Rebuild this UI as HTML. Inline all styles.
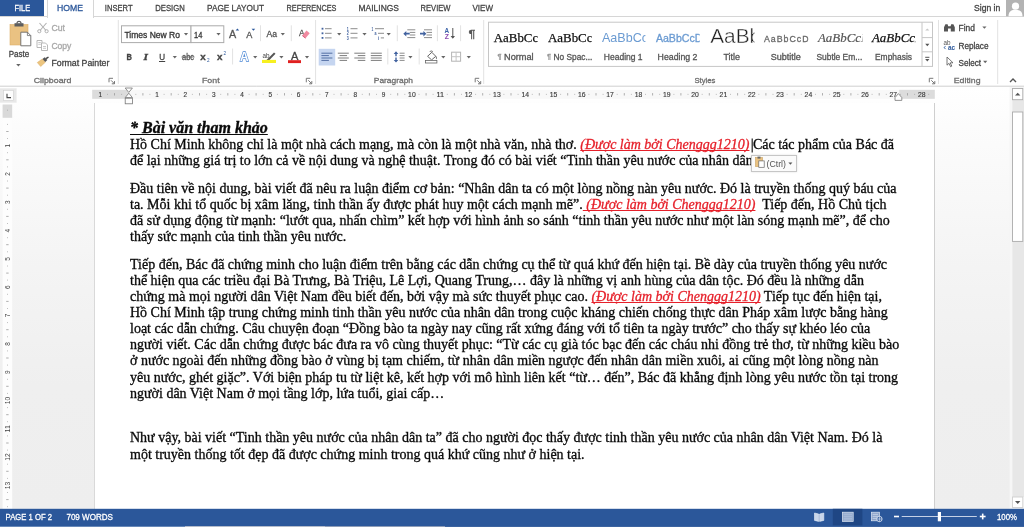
<!DOCTYPE html>
<html lang="vi"><head><meta charset="utf-8"><title>Document - Word</title>
<style>
*{box-sizing:border-box;margin:0;padding:0}
html,body{width:1024px;height:527px;overflow:hidden;background:#fff}
body{position:relative;font-family:"Liberation Sans",sans-serif;font-size:11px;color:#444}
svg{position:absolute;left:0;top:0;will-change:transform}
svg text{white-space:pre}
#doc{position:absolute;left:0;top:87px;width:1024px;height:422px;background:linear-gradient(#ffffff 0px,#fcfcfc 40px,#f4f4f4 180px,#efefef 300px,#eeeeee 422px)}
#page{position:absolute;left:94px;top:103px;width:841px;height:406px;background:#fff;border-left:1px solid #d9d9d9;border-right:1px solid #cfcfcf;}
.t{text-decoration-skip-ink:none;position:absolute;white-space:pre;font-family:"Liberation Serif",serif;font-size:14px;line-height:16px;color:#0a0a0a;left:130px;-webkit-text-stroke:0.32px #0a0a0a}
.title{text-decoration-thickness:1.3px;font-size:16px;font-weight:bold;font-style:italic;text-decoration:underline;-webkit-text-stroke:0.35px #0a0a0a}
.r{color:#e6202a;font-style:italic;text-decoration:underline;text-decoration-thickness:1.1px;-webkit-text-stroke:0.3px #e6202a}
#txt{position:absolute;left:0;top:0;width:1024px;height:527px;will-change:transform}
#pop{position:absolute;left:751px;top:155px;width:45.5px;height:17px;box-shadow:0 0 2px rgba(0,0,0,0.12);background:#fbfbfb;border:1px solid #c6c6c6}
</style></head><body>
<div id="doc"></div>
<div id="page"></div>
<div id="txt">
<div class="t title" id="l0" style="top:120px;">* Bài văn tham khảo</div>
<div class="t " id="l1" style="top:137px;">Hồ Chí Minh không chỉ là một nhà cách mạng, mà còn là một nhà văn, nhà thơ. <span class="r">(Được làm bởi Chenggg1210)</span> Các tác phẩm của Bác đã</div>
<div class="t " id="l2" style="top:153px;">để lại những giá trị to lớn cả về nội dung và nghệ thuật. Trong đó có bài viết “Tinh thần yêu nước của nhân dân</div>
<div class="t " id="l3" style="top:181px;">Đầu tiên về nội dung, bài viết đã nêu ra luận điểm cơ bản: “Nhân dân ta có một lòng nồng nàn yêu nước. Đó là truyền thống quý báu của</div>
<div class="t " id="l4" style="top:197px;">ta. Mỗi khi tổ quốc bị xâm lăng, tinh thần ấy được phát huy một cách mạnh mẽ”.<span class="r"> (Được làm bởi Chenggg1210)</span>&nbsp; Tiếp đến, Hồ Chủ tịch</div>
<div class="t " id="l5" style="top:213px;">đã sử dụng động từ mạnh: “lướt qua, nhấn chìm” kết hợp với hình ảnh so sánh “tinh thần yêu nước như một làn sóng mạnh mẽ”, để cho</div>
<div class="t " id="l6" style="top:229px;">thấy sức mạnh của tinh thần yêu nước.</div>
<div class="t " id="l7" style="top:257px;">Tiếp đến, Bác đã chứng minh cho luận điểm trên bằng các dẫn chứng cụ thể từ quá khứ đến hiện tại. Bề dày của truyền thống yêu nước</div>
<div class="t " id="l8" style="top:273px;">thể hiện qua các triều đại Bà Trưng, Bà Triệu, Lê Lợi, Quang Trung,… đây là những vị anh hùng của dân tộc. Đó đều là những dẫn</div>
<div class="t " id="l9" style="top:289px;">chứng mà mọi người dân Việt Nam đều biết đến, bởi vậy mà sức thuyết phục cao. <span class="r">(Được làm bởi Chenggg1210)</span> Tiếp tục đến hiện tại,</div>
<div class="t " id="l10" style="top:305px;">Hồ Chí Minh tập trung chứng minh tinh thần yêu nước của nhân dân trong cuộc kháng chiến chống thực dân Pháp xâm lược bằng hàng</div>
<div class="t " id="l11" style="top:321px;">loạt các dẫn chứng. Câu chuyện đoạn “Đồng bào ta ngày nay cũng rất xứng đáng với tổ tiên ta ngày trước” cho thấy sự khéo léo của</div>
<div class="t " id="l12" style="top:337px;">người viết. Các dẫn chứng được bác đưa ra vô cùng thuyết phục: “Từ các cụ già tóc bạc đến các cháu nhi đồng trẻ thơ, từ những kiều bào</div>
<div class="t " id="l13" style="top:353px;">ở nước ngoài đến những đồng bào ở vùng bị tạm chiếm, từ nhân dân miền ngược đến nhân dân miền xuôi, ai cũng một lòng nồng nàn</div>
<div class="t " id="l14" style="top:370px;">yêu nước, ghét giặc”. Với biện pháp tu từ liệt kê, kết hợp với mô hình liên kết “từ… đến”, Bác đã khẳng định lòng yêu nước tồn tại trong</div>
<div class="t " id="l15" style="top:386px;">người dân Việt Nam ở mọi tầng lớp, lứa tuổi, giai cấp…</div>
<div class="t " id="l16" style="top:430px;">Như vậy, bài viết “Tinh thần yêu nước của nhân dân ta” đã cho người đọc thấy được tinh thần yêu nước của nhân dân Việt Nam. Đó là</div>
<div class="t " id="l17" style="top:447px;">một truyền thống tốt đẹp đã được chứng minh trong quá khứ cũng như ở hiện tại.</div>
</div>
<div id="pop"></div>
<svg width="1024" height="527" viewBox="0 0 1024 527">
<rect x="0" y="0" width="1024" height="86" fill="#fff"/>
<rect x="0" y="0" width="44" height="16.8" fill="#2b579a"/><text x="14.5" y="11.4" font-family="Liberation Sans, sans-serif" font-size="9.6" fill="#fff" font-weight="normal" font-style="normal" textLength="15.7" lengthAdjust="spacingAndGlyphs" stroke="#fff" stroke-width="0.3">FILE</text><line x1="0" y1="16.5" x2="1024" y2="16.5" stroke="#d6d6d6" stroke-width="1"/><rect x="47.5" y="-1" width="46" height="18.5" fill="#fff" stroke="#d6d6d6" stroke-width="1"/><rect x="48" y="16" width="45" height="2" fill="#fff"/><text x="57" y="11.4" font-family="Liberation Sans, sans-serif" font-size="9.6" fill="#2b579a" font-weight="normal" font-style="normal" textLength="26.0" lengthAdjust="spacingAndGlyphs" stroke="#2b579a" stroke-width="0.3">HOME</text><text x="104.8" y="11.4" font-family="Liberation Sans, sans-serif" font-size="9.6" fill="#444" font-weight="normal" font-style="normal" textLength="27.8" lengthAdjust="spacingAndGlyphs" stroke="#444" stroke-width="0.3">INSERT</text><text x="155.3" y="11.4" font-family="Liberation Sans, sans-serif" font-size="9.6" fill="#444" font-weight="normal" font-style="normal" textLength="29.5" lengthAdjust="spacingAndGlyphs" stroke="#444" stroke-width="0.3">DESIGN</text><text x="207" y="11.4" font-family="Liberation Sans, sans-serif" font-size="9.6" fill="#444" font-weight="normal" font-style="normal" textLength="57.0" lengthAdjust="spacingAndGlyphs" stroke="#444" stroke-width="0.3">PAGE LAYOUT</text><text x="286.5" y="11.4" font-family="Liberation Sans, sans-serif" font-size="9.6" fill="#444" font-weight="normal" font-style="normal" textLength="50.0" lengthAdjust="spacingAndGlyphs" stroke="#444" stroke-width="0.3">REFERENCES</text><text x="358.5" y="11.4" font-family="Liberation Sans, sans-serif" font-size="9.6" fill="#444" font-weight="normal" font-style="normal" textLength="40.5" lengthAdjust="spacingAndGlyphs" stroke="#444" stroke-width="0.3">MAILINGS</text><text x="420.5" y="11.4" font-family="Liberation Sans, sans-serif" font-size="9.6" fill="#444" font-weight="normal" font-style="normal" textLength="30.0" lengthAdjust="spacingAndGlyphs" stroke="#444" stroke-width="0.3">REVIEW</text><text x="472.5" y="11.4" font-family="Liberation Sans, sans-serif" font-size="9.6" fill="#444" font-weight="normal" font-style="normal" textLength="20.5" lengthAdjust="spacingAndGlyphs" stroke="#444" stroke-width="0.3">VIEW</text><text x="974" y="10.6" font-family="Liberation Sans, sans-serif" font-size="8.7" fill="#444" font-weight="normal" font-style="normal" textLength="26.3" lengthAdjust="spacingAndGlyphs" stroke="#444" stroke-width="0.3">Sign in</text><rect x="1006" y="0" width="18" height="16.3" fill="#b3b3b3"/><circle cx="1015.5" cy="6.2" r="3.6" fill="#fff"/><path d="M1008.5,16.3 c0,-5 3,-6.5 7,-6.5 s7,1.5 7,6.5 z" fill="#fff"/><line x1="0" y1="86.2" x2="1024" y2="86.2" stroke="#c9c9c9" stroke-width="0.9"/><line x1="118.3" y1="20" x2="118.3" y2="84" stroke="#e2e2e2" stroke-width="1"/><line x1="315.6" y1="20" x2="315.6" y2="84" stroke="#e2e2e2" stroke-width="1"/><line x1="483.7" y1="20" x2="483.7" y2="84" stroke="#e2e2e2" stroke-width="1"/><line x1="938.5" y1="20" x2="938.5" y2="84" stroke="#e2e2e2" stroke-width="1"/><line x1="997.7" y1="20" x2="997.7" y2="84" stroke="#e2e2e2" stroke-width="1"/><text x="33.7" y="82.8" font-family="Liberation Sans, sans-serif" font-size="8.1" fill="#6e6e6e" font-weight="normal" font-style="normal" textLength="37.7" lengthAdjust="spacingAndGlyphs" stroke="#6e6e6e" stroke-width="0.3">Clipboard</text><text x="202" y="82.8" font-family="Liberation Sans, sans-serif" font-size="8.1" fill="#6e6e6e" font-weight="normal" font-style="normal" textLength="17.6" lengthAdjust="spacingAndGlyphs" stroke="#6e6e6e" stroke-width="0.3">Font</text><text x="373.8" y="82.8" font-family="Liberation Sans, sans-serif" font-size="8.1" fill="#6e6e6e" font-weight="normal" font-style="normal" textLength="39.2" lengthAdjust="spacingAndGlyphs" stroke="#6e6e6e" stroke-width="0.3">Paragraph</text><text x="694.4" y="82.8" font-family="Liberation Sans, sans-serif" font-size="8.1" fill="#6e6e6e" font-weight="normal" font-style="normal" textLength="21.0" lengthAdjust="spacingAndGlyphs" stroke="#6e6e6e" stroke-width="0.3">Styles</text><text x="953.8" y="82.8" font-family="Liberation Sans, sans-serif" font-size="8.1" fill="#6e6e6e" font-weight="normal" font-style="normal" textLength="26.7" lengthAdjust="spacingAndGlyphs" stroke="#6e6e6e" stroke-width="0.3">Editing</text><path d="M109,82.3 V78.3 H113" fill="none" stroke="#777" stroke-width="1"/><path d="M111,80.3 L114.5,83.8 M114.5,81.1 V83.8 H111.8" fill="none" stroke="#777" stroke-width="1"/><path d="M306.3,82.3 V78.3 H310.3" fill="none" stroke="#777" stroke-width="1"/><path d="M308.3,80.3 L311.8,83.8 M311.8,81.1 V83.8 H309.1" fill="none" stroke="#777" stroke-width="1"/><path d="M475.2,82.3 V78.3 H479.2" fill="none" stroke="#777" stroke-width="1"/><path d="M477.2,80.3 L480.7,83.8 M480.7,81.1 V83.8 H478.0" fill="none" stroke="#777" stroke-width="1"/><path d="M929.3,82.3 V78.3 H933.3" fill="none" stroke="#777" stroke-width="1"/><path d="M931.3,80.3 L934.8,83.8 M934.8,81.1 V83.8 H932.0999999999999" fill="none" stroke="#777" stroke-width="1"/><path d="M1010,82 l3,-3 l3,3" fill="none" stroke="#555" stroke-width="1.4"/><rect x="10" y="24.5" width="18" height="20.5" fill="#eac282"/><rect x="10" y="24.5" width="18" height="20.5" fill="none" stroke="#dcae68" stroke-width="0.6"/><rect x="14.5" y="23.2" width="9" height="3.3" fill="#5d5d5d"/><path d="M17,23.4 a2,2 0 0 1 4,0" fill="none" stroke="#5d5d5d" stroke-width="1.2"/><path d="M20.8,32.2 h6.6 l3.4,3.4 v10.2 h-10 z" fill="#fff" stroke="#6a6a6a" stroke-width="0.9"/><path d="M27.4,32.2 v3.4 h3.4" fill="none" stroke="#6a6a6a" stroke-width="0.8"/><text x="8.7" y="56.5" font-family="Liberation Sans, sans-serif" font-size="8.7" fill="#444" font-weight="normal" font-style="normal" textLength="20.5" lengthAdjust="spacingAndGlyphs" stroke="#444" stroke-width="0.3">Paste</text><path d="M16.2,64.0 h4.4 l-2.2,2.6 z" fill="#666"/><path d="M39.5,23 L46,30.5 M46.5,23 L40,30.5" fill="none" stroke="#b1b1b1" stroke-width="1.1"/><circle cx="39.3" cy="31.2" r="1.6" fill="none" stroke="#b1b1b1" stroke-width="1"/><circle cx="46.6" cy="31.2" r="1.6" fill="none" stroke="#b1b1b1" stroke-width="1"/><text x="51.4" y="31" font-family="Liberation Sans, sans-serif" font-size="8.7" fill="#a9a9a9" font-weight="normal" font-style="normal" textLength="13.6" lengthAdjust="spacingAndGlyphs" stroke="#a9a9a9" stroke-width="0.3">Cut</text><path d="M37,40.5 h5 v7 h-5 z" fill="none" stroke="#b1b1b1" stroke-width="0.9"/><path d="M41.5,43 h4 l2,2 v5.5 h-6 z" fill="#fff" stroke="#b1b1b1" stroke-width="0.9"/><line x1="38.3" y1="42.5" x2="40.8" y2="42.5" stroke="#b1b1b1" stroke-width="0.7"/><line x1="38.3" y1="44.3" x2="40.8" y2="44.3" stroke="#b1b1b1" stroke-width="0.7"/><line x1="43" y1="46.5" x2="46" y2="46.5" stroke="#b1b1b1" stroke-width="0.7"/><line x1="43" y1="48.3" x2="46" y2="48.3" stroke="#b1b1b1" stroke-width="0.7"/><text x="51.4" y="48.6" font-family="Liberation Sans, sans-serif" font-size="8.7" fill="#a9a9a9" font-weight="normal" font-style="normal" textLength="20.0" lengthAdjust="spacingAndGlyphs" stroke="#a9a9a9" stroke-width="0.3">Copy</text><path d="M37.3,62.5 l5,-3.4 l3,3.2 l-4.6,4.2 z" fill="#ecc57f" stroke="#d9ab63" stroke-width="0.5"/><path d="M42.5,59 l2.2,-1.8 l2.6,2.8 l-2,1.9 z" fill="#555"/><path d="M45.5,58 l2.6,-1.6 l0.8,1 l-2.3,1.9 z" fill="#444"/><text x="51.4" y="65.7" font-family="Liberation Sans, sans-serif" font-size="8.7" fill="#444" font-weight="normal" font-style="normal" textLength="58.0" lengthAdjust="spacingAndGlyphs" stroke="#444" stroke-width="0.3">Format Painter</text><rect x="121.5" y="25.8" width="69.5" height="16.8" fill="#fff" stroke="#ababab" stroke-width="1"/><rect x="191" y="25.8" width="32.8" height="16.8" fill="#fff" stroke="#ababab" stroke-width="1"/><text x="124.4" y="37.5" font-family="Liberation Sans, sans-serif" font-size="8.7" fill="#333" font-weight="normal" font-style="normal" textLength="55.6" lengthAdjust="spacingAndGlyphs" stroke="#333" stroke-width="0.3">Times New Ro</text><path d="M183.9,33.0 h4.2 l-2.1,2.4 z" fill="#666"/><text x="194" y="37.5" font-family="Liberation Sans, sans-serif" font-size="8.7" fill="#333" font-weight="normal" font-style="normal" textLength="8.3" lengthAdjust="spacingAndGlyphs" stroke="#333" stroke-width="0.3">14</text><path d="M216.4,33.0 h4.2 l-2.1,2.4 z" fill="#666"/><text x="229" y="38" font-family="Liberation Sans, sans-serif" font-size="11.8" fill="#555" font-weight="normal" font-style="normal" textLength="7.2" lengthAdjust="spacingAndGlyphs" stroke="#555" stroke-width="0.3">A</text><path d="M235.6,30.6 l1.8,-2 l1.8,2 z" fill="#2b579a"/><text x="246.2" y="38" font-family="Liberation Sans, sans-serif" font-size="9.6" fill="#555" font-weight="normal" font-style="normal" textLength="6.1" lengthAdjust="spacingAndGlyphs" stroke="#555" stroke-width="0.3">A</text><path d="M251.6,28.8 h3.6 l-1.8,2 z" fill="#2b579a"/><line x1="260.5" y1="25.3" x2="260.5" y2="41.2" stroke="#e2e2e2" stroke-width="1"/><text x="266.5" y="36.7" font-family="Liberation Sans, sans-serif" font-size="8.7" fill="#555" font-weight="normal" font-style="normal" textLength="10.5" lengthAdjust="spacingAndGlyphs" stroke="#555" stroke-width="0.3">Aa</text><path d="M280.7,33.0 h4.2 l-2.1,2.4 z" fill="#666"/><line x1="291.3" y1="25.3" x2="291.3" y2="41.2" stroke="#e2e2e2" stroke-width="1"/><text x="299" y="35.5" font-family="Liberation Sans, sans-serif" font-size="9.6" fill="#555" font-weight="normal" font-style="normal" textLength="5.5" lengthAdjust="spacingAndGlyphs" stroke="#555" stroke-width="0.3">A</text><path d="M302.3,35.6 l4.2,-5 l3.2,2.6 l-4.2,5 z" fill="#f08aa0"/><path d="M302.3,35.6 l3.2,2.6" fill="none" stroke="#d95f7c" stroke-width="1"/><text x="126.6" y="59.8" font-family="Liberation Sans, sans-serif" font-size="8.7" fill="#444" font-weight="bold" font-style="normal" textLength="5.4" lengthAdjust="spacingAndGlyphs" stroke="#444" stroke-width="0.3">B</text><text x="143.6" y="59.8" font-family="Liberation Serif, serif" font-size="8.7" fill="#444" font-weight="bold" font-style="italic" textLength="4.4" lengthAdjust="spacingAndGlyphs" stroke="#444" stroke-width="0.3">I</text><text x="159.2" y="59.6" font-family="Liberation Sans, sans-serif" font-size="8.7" fill="#444" font-weight="normal" font-style="normal" textLength="5.8" lengthAdjust="spacingAndGlyphs" stroke="#444" stroke-width="0.3">U</text><line x1="159" y1="61.5" x2="165.2" y2="61.5" stroke="#444" stroke-width="1"/><path d="M172.70000000000002,56.0 h4.2 l-2.1,2.4 z" fill="#666"/><text x="182" y="59.6" font-family="Liberation Sans, sans-serif" font-size="9.4" fill="#555" font-weight="normal" font-style="normal" textLength="12.0" lengthAdjust="spacingAndGlyphs" stroke="#555" stroke-width="0.3">abc</text><line x1="181.5" y1="57" x2="194.5" y2="57" stroke="#555" stroke-width="0.8"/><text x="200.3" y="59.8" font-family="Liberation Sans, sans-serif" font-size="8.7" fill="#444" font-weight="bold" font-style="normal" textLength="5.5" lengthAdjust="spacingAndGlyphs" stroke="#444" stroke-width="0.3">x</text><text x="207" y="61.5" font-family="Liberation Sans, sans-serif" font-size="5.5" fill="#2b579a" font-weight="normal" font-style="normal" textLength="2.6" lengthAdjust="spacingAndGlyphs">2</text><text x="217" y="59.8" font-family="Liberation Sans, sans-serif" font-size="8.7" fill="#444" font-weight="bold" font-style="normal" textLength="5.5" lengthAdjust="spacingAndGlyphs" stroke="#444" stroke-width="0.3">x</text><text x="223.6" y="55" font-family="Liberation Sans, sans-serif" font-size="5.5" fill="#2b579a" font-weight="normal" font-style="normal" textLength="2.6" lengthAdjust="spacingAndGlyphs">2</text><line x1="232.6" y1="48.5" x2="232.6" y2="64.5" stroke="#e2e2e2" stroke-width="1"/><text x="240" y="61.2" font-family="Liberation Sans, sans-serif" font-size="12.6" fill="#fff" font-weight="bold" font-style="normal" textLength="8.6" lengthAdjust="spacingAndGlyphs" stroke="#4f8ad6" stroke-width="1.3" paint-order="stroke">A</text><path d="M253.1,56.0 h4.2 l-2.1,2.4 z" fill="#666"/><text x="262.5" y="57.5" font-family="Liberation Sans, sans-serif" font-size="7" fill="#444" font-weight="normal" font-style="normal" textLength="7.0" lengthAdjust="spacingAndGlyphs">ab</text><path d="M266.5,60 l7.5,-7.6 l1.5,1.4 l-7.5,7.6 z" fill="#555"/><rect x="262" y="59.9" width="14" height="3.1" fill="#f7f020"/><path d="M279.29999999999995,56.0 h4.2 l-2.1,2.4 z" fill="#666"/><text x="291" y="59.6" font-family="Liberation Sans, sans-serif" font-size="10.6" fill="#444" font-weight="normal" font-style="normal" textLength="7.4" lengthAdjust="spacingAndGlyphs" stroke="#444" stroke-width="0.3">A</text><rect x="288" y="60.2" width="13" height="2.9" fill="#e02020"/><path d="M304.9,56.0 h4.2 l-2.1,2.4 z" fill="#666"/><rect x="321.6" y="27.8" width="1.8" height="1.8" fill="#41629f"/><line x1="325" y1="28.7" x2="331.6" y2="28.7" stroke="#777" stroke-width="0.85"/><rect x="321.6" y="32.4" width="1.8" height="1.8" fill="#41629f"/><line x1="325" y1="33.3" x2="331.6" y2="33.3" stroke="#777" stroke-width="0.85"/><rect x="321.6" y="37.0" width="1.8" height="1.8" fill="#41629f"/><line x1="325" y1="37.9" x2="331.6" y2="37.9" stroke="#777" stroke-width="0.85"/><path d="M337.09999999999997,33.0 h4.2 l-2.1,2.4 z" fill="#666"/><text x="346.8" y="30.5" font-family="Liberation Sans, sans-serif" font-size="4.6" fill="#41629f" font-weight="bold" font-style="normal" textLength="2.0" lengthAdjust="spacingAndGlyphs">1</text><line x1="350.5" y1="28.7" x2="357.5" y2="28.7" stroke="#777" stroke-width="0.85"/><text x="346.8" y="35.099999999999994" font-family="Liberation Sans, sans-serif" font-size="4.6" fill="#41629f" font-weight="bold" font-style="normal" textLength="2.0" lengthAdjust="spacingAndGlyphs">2</text><line x1="350.5" y1="33.3" x2="357.5" y2="33.3" stroke="#777" stroke-width="0.85"/><text x="346.8" y="39.699999999999996" font-family="Liberation Sans, sans-serif" font-size="4.6" fill="#41629f" font-weight="bold" font-style="normal" textLength="2.0" lengthAdjust="spacingAndGlyphs">3</text><line x1="350.5" y1="37.9" x2="357.5" y2="37.9" stroke="#777" stroke-width="0.85"/><path d="M362.4,33.0 h4.2 l-2.1,2.4 z" fill="#666"/><text x="371.4" y="30.5" font-family="Liberation Sans, sans-serif" font-size="4.6" fill="#41629f" font-weight="bold" font-style="normal" textLength="1.8" lengthAdjust="spacingAndGlyphs">1</text><line x1="375" y1="28.7" x2="384" y2="28.7" stroke="#777" stroke-width="0.85"/><text x="374.5" y="35.2" font-family="Liberation Sans, sans-serif" font-size="4.6" fill="#41629f" font-weight="bold" font-style="normal" textLength="2.0" lengthAdjust="spacingAndGlyphs">a</text><line x1="378" y1="33.3" x2="384" y2="33.3" stroke="#777" stroke-width="0.85"/><text x="378" y="39.8" font-family="Liberation Sans, sans-serif" font-size="4.6" fill="#41629f" font-weight="bold" font-style="normal" textLength="1.2" lengthAdjust="spacingAndGlyphs">i</text><line x1="380.8" y1="37.9" x2="384" y2="37.9" stroke="#777" stroke-width="0.85"/><path d="M386.59999999999997,33.0 h4.2 l-2.1,2.4 z" fill="#666"/><line x1="397.3" y1="25.3" x2="397.3" y2="41.2" stroke="#e2e2e2" stroke-width="1"/><line x1="407.3" y1="29.8" x2="415.3" y2="29.8" stroke="#777" stroke-width="0.85"/><line x1="409.8" y1="32.4" x2="415.3" y2="32.4" stroke="#777" stroke-width="0.85"/><line x1="409.8" y1="35" x2="415.3" y2="35" stroke="#777" stroke-width="0.85"/><line x1="407.3" y1="37.6" x2="415.3" y2="37.6" stroke="#777" stroke-width="0.85"/><path d="M403.3,33.7 l3,-2.8 v1.9 h3.4 v1.8 h-3.4 v1.9 z" fill="#41629f"/><line x1="424" y1="29.8" x2="432" y2="29.8" stroke="#777" stroke-width="0.85"/><line x1="426.5" y1="32.4" x2="432" y2="32.4" stroke="#777" stroke-width="0.85"/><line x1="426.5" y1="35" x2="432" y2="35" stroke="#777" stroke-width="0.85"/><line x1="424" y1="37.6" x2="432" y2="37.6" stroke="#777" stroke-width="0.85"/><path d="M426.4,33.7 l-3,-2.8 v1.9 h-3.4 v1.8 h3.4 v1.9 z" fill="#41629f"/><line x1="437.4" y1="25.3" x2="437.4" y2="41.2" stroke="#e2e2e2" stroke-width="1"/><text x="444.6" y="32.6" font-family="Liberation Sans, sans-serif" font-size="6.8" fill="#3b62a8" font-weight="bold" font-style="normal" textLength="4.6" lengthAdjust="spacingAndGlyphs">A</text><text x="444.8" y="39.2" font-family="Liberation Sans, sans-serif" font-size="6.8" fill="#8a4bb0" font-weight="bold" font-style="normal" textLength="4.2" lengthAdjust="spacingAndGlyphs">Z</text><line x1="452.8" y1="28" x2="452.8" y2="38" stroke="#555" stroke-width="1"/><path d="M450.6,36 l2.2,2.8 l2.2,-2.8 z" fill="#555"/><line x1="460.6" y1="25.3" x2="460.6" y2="41.2" stroke="#e2e2e2" stroke-width="1"/><text x="468.6" y="38" font-family="Liberation Sans, sans-serif" font-size="11.5" fill="#555" font-weight="normal" font-style="normal" textLength="6.9" lengthAdjust="spacingAndGlyphs" stroke="#555" stroke-width="0.3">¶</text><rect x="318.7" y="48.8" width="16.5" height="16.7" fill="#c5d5f0"/><line x1="321.4" y1="53.2" x2="332.4" y2="53.2" stroke="#3e5c96" stroke-width="0.85"/><line x1="321.4" y1="55.6" x2="328.9" y2="55.6" stroke="#3e5c96" stroke-width="0.85"/><line x1="321.4" y1="58" x2="332.4" y2="58" stroke="#3e5c96" stroke-width="0.85"/><line x1="321.4" y1="60.4" x2="328.9" y2="60.4" stroke="#3e5c96" stroke-width="0.85"/><line x1="337.8" y1="53.2" x2="348.8" y2="53.2" stroke="#666" stroke-width="0.85"/><line x1="339.55" y1="55.6" x2="347.05" y2="55.6" stroke="#666" stroke-width="0.85"/><line x1="337.8" y1="58" x2="348.8" y2="58" stroke="#666" stroke-width="0.85"/><line x1="339.55" y1="60.4" x2="347.05" y2="60.4" stroke="#666" stroke-width="0.85"/><line x1="354.3" y1="53.2" x2="365.3" y2="53.2" stroke="#666" stroke-width="0.85"/><line x1="357.8" y1="55.6" x2="365.3" y2="55.6" stroke="#666" stroke-width="0.85"/><line x1="354.3" y1="58" x2="365.3" y2="58" stroke="#666" stroke-width="0.85"/><line x1="357.8" y1="60.4" x2="365.3" y2="60.4" stroke="#666" stroke-width="0.85"/><line x1="370.8" y1="53.2" x2="381.8" y2="53.2" stroke="#666" stroke-width="0.85"/><line x1="370.8" y1="55.6" x2="381.8" y2="55.6" stroke="#666" stroke-width="0.85"/><line x1="370.8" y1="58" x2="381.8" y2="58" stroke="#666" stroke-width="0.85"/><line x1="370.8" y1="60.4" x2="381.8" y2="60.4" stroke="#666" stroke-width="0.85"/><line x1="387.8" y1="48.5" x2="387.8" y2="64.5" stroke="#e2e2e2" stroke-width="1"/><path d="M396,51.2 l-2.3,2.7 h1.6 v2.3 h1.4 v-2.3 h1.6 z M396,62.6 l-2.3,-2.7 h1.6 v-2.3 h1.4 v2.3 h1.6 z" fill="#41629f"/><line x1="399.6" y1="53.2" x2="404.6" y2="53.2" stroke="#777" stroke-width="0.85"/><line x1="399.6" y1="55.6" x2="404.6" y2="55.6" stroke="#777" stroke-width="0.85"/><line x1="399.6" y1="58" x2="404.6" y2="58" stroke="#777" stroke-width="0.85"/><line x1="399.6" y1="60.4" x2="404.6" y2="60.4" stroke="#777" stroke-width="0.85"/><path d="M408.29999999999995,56.0 h4.2 l-2.1,2.4 z" fill="#666"/><line x1="419.2" y1="48.5" x2="419.2" y2="64.5" stroke="#e2e2e2" stroke-width="1"/><path d="M427.6,56.3 l4.2,-4 l4,4 l-4.2,3.6 z" fill="#fff" stroke="#555" stroke-width="0.9"/><path d="M429.8,52 a1.6,1.6 0 0 1 3,0" fill="none" stroke="#555" stroke-width="0.8"/><path d="M436,56 q1.4,1.8 0.6,3.4 q-1.3,-0.6 -0.6,-3.4 z" fill="#555"/><rect x="425.5" y="60.4" width="11.4" height="2.6" fill="#fff" stroke="#666" stroke-width="0.8"/><path d="M441.2,56.0 h4.2 l-2.1,2.4 z" fill="#666"/><rect x="451.6" y="52.2" width="9" height="9" fill="none" stroke="#b4b4b4" stroke-width="1"/><line x1="456.1" y1="52.2" x2="456.1" y2="61.2" stroke="#c4c4c4" stroke-width="1"/><line x1="451.6" y1="56.7" x2="460.6" y2="56.7" stroke="#c4c4c4" stroke-width="1"/><path d="M466.7,56.0 h4.2 l-2.1,2.4 z" fill="#666"/><rect x="488.5" y="22.2" width="444" height="44.2" fill="#fff" stroke="#c6c6c6" stroke-width="1"/><line x1="922" y1="22.2" x2="922" y2="66.4" stroke="#c6c6c6" stroke-width="1"/><line x1="922" y1="37.6" x2="932.5" y2="37.6" stroke="#c6c6c6" stroke-width="1"/><line x1="922" y1="51.8" x2="932.5" y2="51.8" stroke="#c6c6c6" stroke-width="1"/><path d="M925.2,30.6 l2.1,-2.2 l2.1,2.2 z" fill="#c8c8c8"/><path d="M925.1999999999999,43.8 h4.2 l-2.1,2.4 z" fill="#555"/><line x1="925.2" y1="57.3" x2="929.4" y2="57.3" stroke="#555" stroke-width="1"/><path d="M925.1999999999999,59.099999999999994 h4.2 l-2.1,2.4 z" fill="#555"/><clipPath id="c1"><rect x="489" y="23" width="48.6" height="43"/></clipPath><clipPath id="c2"><rect x="540" y="23" width="51.6" height="43"/></clipPath><clipPath id="c3"><rect x="595" y="23" width="50.4" height="43"/></clipPath><clipPath id="c4"><rect x="650" y="23" width="49.6" height="43"/></clipPath><clipPath id="c5"><rect x="705" y="27.6" width="49.4" height="38"/></clipPath><clipPath id="c6"><rect x="760" y="23" width="48.4" height="43"/></clipPath><clipPath id="c7"><rect x="814" y="23" width="48.4" height="43"/></clipPath><clipPath id="c8"><rect x="868" y="23" width="47.4" height="43"/></clipPath><text x="493.8" y="41.6" font-family="Liberation Serif, serif" font-size="12.9" fill="#111" font-weight="normal" font-style="normal" stroke="#111" stroke-width="0.25" clip-path="url(#c1)">AaBbCcDd</text><text x="497.4" y="59.4" font-family="Liberation Sans, sans-serif" font-size="8" fill="#9a9a9a" font-weight="normal" font-style="normal" textLength="4.0" lengthAdjust="spacingAndGlyphs" stroke="#9a9a9a" stroke-width="0.3">¶</text><text x="504" y="59.6" font-family="Liberation Sans, sans-serif" font-size="8.7" fill="#555" font-weight="normal" font-style="normal" textLength="29.6" lengthAdjust="spacingAndGlyphs" stroke="#555" stroke-width="0.3">Normal</text><text x="548" y="41.6" font-family="Liberation Serif, serif" font-size="12.9" fill="#111" font-weight="normal" font-style="normal" stroke="#111" stroke-width="0.25" clip-path="url(#c2)">AaBbCcDd</text><text x="547" y="59.4" font-family="Liberation Sans, sans-serif" font-size="8" fill="#9a9a9a" font-weight="normal" font-style="normal" textLength="4.0" lengthAdjust="spacingAndGlyphs" stroke="#9a9a9a" stroke-width="0.3">¶</text><text x="553.6" y="59.6" font-family="Liberation Sans, sans-serif" font-size="8.7" fill="#555" font-weight="normal" font-style="normal" textLength="38.8" lengthAdjust="spacingAndGlyphs" stroke="#555" stroke-width="0.3">No Spac...</text><text x="602" y="41.8" font-family="Liberation Sans, sans-serif" font-size="13.6" fill="#6b9bd2" font-weight="normal" font-style="normal" clip-path="url(#c3)" textLength="62" lengthAdjust="spacingAndGlyphs">AaBbCcDd</text><text x="603.8" y="59.6" font-family="Liberation Sans, sans-serif" font-size="8.7" fill="#555" font-weight="normal" font-style="normal" textLength="38.8" lengthAdjust="spacingAndGlyphs" stroke="#555" stroke-width="0.3">Heading 1</text><text x="655.9" y="41.6" font-family="Liberation Sans, sans-serif" font-size="10.4" fill="#6b9bd2" font-weight="normal" font-style="normal" clip-path="url(#c4)" textLength="46.5" lengthAdjust="spacingAndGlyphs" stroke="#6b9bd2" stroke-width="0.3">AaBbCcD</text><text x="657.6" y="59.6" font-family="Liberation Sans, sans-serif" font-size="8.7" fill="#555" font-weight="normal" font-style="normal" textLength="39.9" lengthAdjust="spacingAndGlyphs" stroke="#555" stroke-width="0.3">Heading 2</text><text x="710.2" y="43" font-family="Liberation Sans, sans-serif" font-size="20.2" fill="#222" font-weight="normal" font-style="normal" clip-path="url(#c5)" textLength="51" lengthAdjust="spacingAndGlyphs" stroke="#fff" stroke-width="0.4">AaBb</text><text x="723.4" y="59.6" font-family="Liberation Sans, sans-serif" font-size="8.7" fill="#555" font-weight="normal" font-style="normal" textLength="16.6" lengthAdjust="spacingAndGlyphs" stroke="#555" stroke-width="0.3">Title</text><text x="763.9" y="41.7" font-family="Liberation Sans, sans-serif" font-size="8.8" fill="#6a6a6a" font-weight="normal" font-style="normal" clip-path="url(#c6)" textLength="44.6" lengthAdjust="spacing" stroke="#6a6a6a" stroke-width="0.3">AaBbCcD</text><text x="770.7" y="59.6" font-family="Liberation Sans, sans-serif" font-size="8.7" fill="#555" font-weight="normal" font-style="normal" textLength="30.1" lengthAdjust="spacingAndGlyphs" stroke="#555" stroke-width="0.3">Subtitle</text><text x="818" y="41.6" font-family="Liberation Serif, serif" font-size="12.9" fill="#555" font-weight="normal" font-style="italic" stroke="#555" stroke-width="0.2" clip-path="url(#c7)">AaBbCcDd</text><text x="816.4" y="59.6" font-family="Liberation Sans, sans-serif" font-size="8.7" fill="#555" font-weight="normal" font-style="normal" textLength="45.9" lengthAdjust="spacingAndGlyphs" stroke="#555" stroke-width="0.3">Subtle Em...</text><text x="872" y="41.6" font-family="Liberation Serif, serif" font-size="12.9" fill="#111" font-weight="normal" font-style="italic" stroke="#111" stroke-width="0.25" clip-path="url(#c8)">AaBbCcDd</text><text x="875" y="59.6" font-family="Liberation Sans, sans-serif" font-size="8.7" fill="#555" font-weight="normal" font-style="normal" textLength="37.0" lengthAdjust="spacingAndGlyphs" stroke="#555" stroke-width="0.3">Emphasis</text><path d="M944,31.5 v-4.2 l1.4,-3 h2.2 l0.6,2 h2.4 l0.6,-2 h2.2 l1.4,3 v4.2 h-4 v-3 h-2.8 v3 z" fill="#555"/><text x="958.5" y="31.4" font-family="Liberation Sans, sans-serif" font-size="8.7" fill="#444" font-weight="normal" font-style="normal" textLength="16.4" lengthAdjust="spacingAndGlyphs" stroke="#444" stroke-width="0.3">Find</text><path d="M982.3,26.400000000000002 h4.2 l-2.1,2.4 z" fill="#666"/><text x="943.5" y="45" font-family="Liberation Sans, sans-serif" font-size="6.8" fill="#555" font-weight="normal" font-style="normal" textLength="7.0" lengthAdjust="spacingAndGlyphs">ab</text><text x="948" y="49.8" font-family="Liberation Sans, sans-serif" font-size="6.8" fill="#2b579a" font-weight="bold" font-style="normal" textLength="7.2" lengthAdjust="spacingAndGlyphs">ac</text><path d="M944,47.5 l1.6,1.6 M944,47.5 l1.6,-1.2" fill="none" stroke="#2b579a" stroke-width="0.9"/><text x="958.5" y="48.7" font-family="Liberation Sans, sans-serif" font-size="8.7" fill="#444" font-weight="normal" font-style="normal" textLength="30.0" lengthAdjust="spacingAndGlyphs" stroke="#444" stroke-width="0.3">Replace</text><path d="M947,57 v8.2 l2,-1.9 l1.6,3.4 l1.2,-0.6 l-1.6,-3.3 h2.8 z" fill="#fff" stroke="#555" stroke-width="0.8"/><text x="958.5" y="66" font-family="Liberation Sans, sans-serif" font-size="8.7" fill="#444" font-weight="normal" font-style="normal" textLength="22.5" lengthAdjust="spacingAndGlyphs" stroke="#444" stroke-width="0.3">Select</text><path d="M983.1,60.8 h4.2 l-2.1,2.4 z" fill="#666"/>
<rect x="0" y="88.3" width="16.6" height="14.4" fill="#e8e8e8"/><rect x="3.6" y="90.4" width="9.8" height="10.2" fill="#fdfdfd" stroke="#d0d0d0" stroke-width="0.6"/><path d="M7,93.8 v3.8 h4" fill="none" stroke="#444" stroke-width="1.1"/><rect x="92.2" y="89.8" width="842.6" height="9" fill="#f8f8f8"/><rect x="92.2" y="89.8" width="36.3" height="9" fill="#dcdcdc"/><rect x="899.2" y="89.8" width="35.6" height="9" fill="#dcdcdc"/><text x="98.6" y="97.4" font-family="Liberation Sans, sans-serif" font-size="7.8" fill="#3a3a3a" font-weight="normal" font-style="normal" textLength="3.6" lengthAdjust="spacingAndGlyphs" stroke="#3a3a3a" stroke-width="0.15">1</text><line x1="107.5" y1="93.89999999999999" x2="107.5" y2="94.7" stroke="#9a9a9a" stroke-width="0.8"/><line x1="114.5" y1="93.1" x2="114.5" y2="95.5" stroke="#9a9a9a" stroke-width="0.8"/><line x1="121.6" y1="93.89999999999999" x2="121.6" y2="94.7" stroke="#9a9a9a" stroke-width="0.8"/><line x1="135.8" y1="93.89999999999999" x2="135.8" y2="94.7" stroke="#9a9a9a" stroke-width="0.8"/><line x1="142.9" y1="93.1" x2="142.9" y2="95.5" stroke="#9a9a9a" stroke-width="0.8"/><line x1="149.9" y1="93.89999999999999" x2="149.9" y2="94.7" stroke="#9a9a9a" stroke-width="0.8"/><text x="155.2" y="97.4" font-family="Liberation Sans, sans-serif" font-size="7.8" fill="#3a3a3a" font-weight="normal" font-style="normal" textLength="3.6" lengthAdjust="spacingAndGlyphs" stroke="#3a3a3a" stroke-width="0.15">1</text><line x1="164.1" y1="93.89999999999999" x2="164.1" y2="94.7" stroke="#9a9a9a" stroke-width="0.8"/><line x1="171.2" y1="93.1" x2="171.2" y2="95.5" stroke="#9a9a9a" stroke-width="0.8"/><line x1="178.3" y1="93.89999999999999" x2="178.3" y2="94.7" stroke="#9a9a9a" stroke-width="0.8"/><text x="183.5" y="97.4" font-family="Liberation Sans, sans-serif" font-size="7.8" fill="#3a3a3a" font-weight="normal" font-style="normal" textLength="3.6" lengthAdjust="spacingAndGlyphs" stroke="#3a3a3a" stroke-width="0.15">2</text><line x1="192.4" y1="93.89999999999999" x2="192.4" y2="94.7" stroke="#9a9a9a" stroke-width="0.8"/><line x1="199.5" y1="93.1" x2="199.5" y2="95.5" stroke="#9a9a9a" stroke-width="0.8"/><line x1="206.6" y1="93.89999999999999" x2="206.6" y2="94.7" stroke="#9a9a9a" stroke-width="0.8"/><text x="211.9" y="97.4" font-family="Liberation Sans, sans-serif" font-size="7.8" fill="#3a3a3a" font-weight="normal" font-style="normal" textLength="3.6" lengthAdjust="spacingAndGlyphs" stroke="#3a3a3a" stroke-width="0.15">3</text><line x1="220.7" y1="93.89999999999999" x2="220.7" y2="94.7" stroke="#9a9a9a" stroke-width="0.8"/><line x1="227.8" y1="93.1" x2="227.8" y2="95.5" stroke="#9a9a9a" stroke-width="0.8"/><line x1="234.9" y1="93.89999999999999" x2="234.9" y2="94.7" stroke="#9a9a9a" stroke-width="0.8"/><text x="240.2" y="97.4" font-family="Liberation Sans, sans-serif" font-size="7.8" fill="#3a3a3a" font-weight="normal" font-style="normal" textLength="3.6" lengthAdjust="spacingAndGlyphs" stroke="#3a3a3a" stroke-width="0.15">4</text><line x1="249.1" y1="93.89999999999999" x2="249.1" y2="94.7" stroke="#9a9a9a" stroke-width="0.8"/><line x1="256.1" y1="93.1" x2="256.1" y2="95.5" stroke="#9a9a9a" stroke-width="0.8"/><line x1="263.2" y1="93.89999999999999" x2="263.2" y2="94.7" stroke="#9a9a9a" stroke-width="0.8"/><text x="268.5" y="97.4" font-family="Liberation Sans, sans-serif" font-size="7.8" fill="#3a3a3a" font-weight="normal" font-style="normal" textLength="3.6" lengthAdjust="spacingAndGlyphs" stroke="#3a3a3a" stroke-width="0.15">5</text><line x1="277.4" y1="93.89999999999999" x2="277.4" y2="94.7" stroke="#9a9a9a" stroke-width="0.8"/><line x1="284.5" y1="93.1" x2="284.5" y2="95.5" stroke="#9a9a9a" stroke-width="0.8"/><line x1="291.5" y1="93.89999999999999" x2="291.5" y2="94.7" stroke="#9a9a9a" stroke-width="0.8"/><text x="296.8" y="97.4" font-family="Liberation Sans, sans-serif" font-size="7.8" fill="#3a3a3a" font-weight="normal" font-style="normal" textLength="3.6" lengthAdjust="spacingAndGlyphs" stroke="#3a3a3a" stroke-width="0.15">6</text><line x1="305.7" y1="93.89999999999999" x2="305.7" y2="94.7" stroke="#9a9a9a" stroke-width="0.8"/><line x1="312.8" y1="93.1" x2="312.8" y2="95.5" stroke="#9a9a9a" stroke-width="0.8"/><line x1="319.9" y1="93.89999999999999" x2="319.9" y2="94.7" stroke="#9a9a9a" stroke-width="0.8"/><text x="325.1" y="97.4" font-family="Liberation Sans, sans-serif" font-size="7.8" fill="#3a3a3a" font-weight="normal" font-style="normal" textLength="3.6" lengthAdjust="spacingAndGlyphs" stroke="#3a3a3a" stroke-width="0.15">7</text><line x1="334.0" y1="93.89999999999999" x2="334.0" y2="94.7" stroke="#9a9a9a" stroke-width="0.8"/><line x1="341.1" y1="93.1" x2="341.1" y2="95.5" stroke="#9a9a9a" stroke-width="0.8"/><line x1="348.2" y1="93.89999999999999" x2="348.2" y2="94.7" stroke="#9a9a9a" stroke-width="0.8"/><text x="353.5" y="97.4" font-family="Liberation Sans, sans-serif" font-size="7.8" fill="#3a3a3a" font-weight="normal" font-style="normal" textLength="3.6" lengthAdjust="spacingAndGlyphs" stroke="#3a3a3a" stroke-width="0.15">8</text><line x1="362.3" y1="93.89999999999999" x2="362.3" y2="94.7" stroke="#9a9a9a" stroke-width="0.8"/><line x1="369.4" y1="93.1" x2="369.4" y2="95.5" stroke="#9a9a9a" stroke-width="0.8"/><line x1="376.5" y1="93.89999999999999" x2="376.5" y2="94.7" stroke="#9a9a9a" stroke-width="0.8"/><text x="381.8" y="97.4" font-family="Liberation Sans, sans-serif" font-size="7.8" fill="#3a3a3a" font-weight="normal" font-style="normal" textLength="3.6" lengthAdjust="spacingAndGlyphs" stroke="#3a3a3a" stroke-width="0.15">9</text><line x1="390.7" y1="93.89999999999999" x2="390.7" y2="94.7" stroke="#9a9a9a" stroke-width="0.8"/><line x1="397.7" y1="93.1" x2="397.7" y2="95.5" stroke="#9a9a9a" stroke-width="0.8"/><line x1="404.8" y1="93.89999999999999" x2="404.8" y2="94.7" stroke="#9a9a9a" stroke-width="0.8"/><text x="408.1" y="97.4" font-family="Liberation Sans, sans-serif" font-size="7.8" fill="#3a3a3a" font-weight="normal" font-style="normal" textLength="7.6" lengthAdjust="spacingAndGlyphs" stroke="#3a3a3a" stroke-width="0.15">10</text><line x1="419.0" y1="93.89999999999999" x2="419.0" y2="94.7" stroke="#9a9a9a" stroke-width="0.8"/><line x1="426.1" y1="93.1" x2="426.1" y2="95.5" stroke="#9a9a9a" stroke-width="0.8"/><line x1="433.1" y1="93.89999999999999" x2="433.1" y2="94.7" stroke="#9a9a9a" stroke-width="0.8"/><text x="436.4" y="97.4" font-family="Liberation Sans, sans-serif" font-size="7.8" fill="#3a3a3a" font-weight="normal" font-style="normal" textLength="7.6" lengthAdjust="spacingAndGlyphs" stroke="#3a3a3a" stroke-width="0.15">11</text><line x1="447.3" y1="93.89999999999999" x2="447.3" y2="94.7" stroke="#9a9a9a" stroke-width="0.8"/><line x1="454.4" y1="93.1" x2="454.4" y2="95.5" stroke="#9a9a9a" stroke-width="0.8"/><line x1="461.5" y1="93.89999999999999" x2="461.5" y2="94.7" stroke="#9a9a9a" stroke-width="0.8"/><text x="464.7" y="97.4" font-family="Liberation Sans, sans-serif" font-size="7.8" fill="#3a3a3a" font-weight="normal" font-style="normal" textLength="7.6" lengthAdjust="spacingAndGlyphs" stroke="#3a3a3a" stroke-width="0.15">12</text><line x1="475.6" y1="93.89999999999999" x2="475.6" y2="94.7" stroke="#9a9a9a" stroke-width="0.8"/><line x1="482.7" y1="93.1" x2="482.7" y2="95.5" stroke="#9a9a9a" stroke-width="0.8"/><line x1="489.8" y1="93.89999999999999" x2="489.8" y2="94.7" stroke="#9a9a9a" stroke-width="0.8"/><text x="493.1" y="97.4" font-family="Liberation Sans, sans-serif" font-size="7.8" fill="#3a3a3a" font-weight="normal" font-style="normal" textLength="7.6" lengthAdjust="spacingAndGlyphs" stroke="#3a3a3a" stroke-width="0.15">13</text><line x1="503.9" y1="93.89999999999999" x2="503.9" y2="94.7" stroke="#9a9a9a" stroke-width="0.8"/><line x1="511.0" y1="93.1" x2="511.0" y2="95.5" stroke="#9a9a9a" stroke-width="0.8"/><line x1="518.1" y1="93.89999999999999" x2="518.1" y2="94.7" stroke="#9a9a9a" stroke-width="0.8"/><text x="521.4" y="97.4" font-family="Liberation Sans, sans-serif" font-size="7.8" fill="#3a3a3a" font-weight="normal" font-style="normal" textLength="7.6" lengthAdjust="spacingAndGlyphs" stroke="#3a3a3a" stroke-width="0.15">14</text><line x1="532.3" y1="93.89999999999999" x2="532.3" y2="94.7" stroke="#9a9a9a" stroke-width="0.8"/><line x1="539.3" y1="93.1" x2="539.3" y2="95.5" stroke="#9a9a9a" stroke-width="0.8"/><line x1="546.4" y1="93.89999999999999" x2="546.4" y2="94.7" stroke="#9a9a9a" stroke-width="0.8"/><text x="549.7" y="97.4" font-family="Liberation Sans, sans-serif" font-size="7.8" fill="#3a3a3a" font-weight="normal" font-style="normal" textLength="7.6" lengthAdjust="spacingAndGlyphs" stroke="#3a3a3a" stroke-width="0.15">15</text><line x1="560.6" y1="93.89999999999999" x2="560.6" y2="94.7" stroke="#9a9a9a" stroke-width="0.8"/><line x1="567.7" y1="93.1" x2="567.7" y2="95.5" stroke="#9a9a9a" stroke-width="0.8"/><line x1="574.7" y1="93.89999999999999" x2="574.7" y2="94.7" stroke="#9a9a9a" stroke-width="0.8"/><text x="578.0" y="97.4" font-family="Liberation Sans, sans-serif" font-size="7.8" fill="#3a3a3a" font-weight="normal" font-style="normal" textLength="7.6" lengthAdjust="spacingAndGlyphs" stroke="#3a3a3a" stroke-width="0.15">16</text><line x1="588.9" y1="93.89999999999999" x2="588.9" y2="94.7" stroke="#9a9a9a" stroke-width="0.8"/><line x1="596.0" y1="93.1" x2="596.0" y2="95.5" stroke="#9a9a9a" stroke-width="0.8"/><line x1="603.1" y1="93.89999999999999" x2="603.1" y2="94.7" stroke="#9a9a9a" stroke-width="0.8"/><text x="606.3" y="97.4" font-family="Liberation Sans, sans-serif" font-size="7.8" fill="#3a3a3a" font-weight="normal" font-style="normal" textLength="7.6" lengthAdjust="spacingAndGlyphs" stroke="#3a3a3a" stroke-width="0.15">17</text><line x1="617.2" y1="93.89999999999999" x2="617.2" y2="94.7" stroke="#9a9a9a" stroke-width="0.8"/><line x1="624.3" y1="93.1" x2="624.3" y2="95.5" stroke="#9a9a9a" stroke-width="0.8"/><line x1="631.4" y1="93.89999999999999" x2="631.4" y2="94.7" stroke="#9a9a9a" stroke-width="0.8"/><text x="634.7" y="97.4" font-family="Liberation Sans, sans-serif" font-size="7.8" fill="#3a3a3a" font-weight="normal" font-style="normal" textLength="7.6" lengthAdjust="spacingAndGlyphs" stroke="#3a3a3a" stroke-width="0.15">18</text><line x1="645.5" y1="93.89999999999999" x2="645.5" y2="94.7" stroke="#9a9a9a" stroke-width="0.8"/><line x1="652.6" y1="93.1" x2="652.6" y2="95.5" stroke="#9a9a9a" stroke-width="0.8"/><line x1="659.7" y1="93.89999999999999" x2="659.7" y2="94.7" stroke="#9a9a9a" stroke-width="0.8"/><text x="663.0" y="97.4" font-family="Liberation Sans, sans-serif" font-size="7.8" fill="#3a3a3a" font-weight="normal" font-style="normal" textLength="7.6" lengthAdjust="spacingAndGlyphs" stroke="#3a3a3a" stroke-width="0.15">19</text><line x1="673.9" y1="93.89999999999999" x2="673.9" y2="94.7" stroke="#9a9a9a" stroke-width="0.8"/><line x1="680.9" y1="93.1" x2="680.9" y2="95.5" stroke="#9a9a9a" stroke-width="0.8"/><line x1="688.0" y1="93.89999999999999" x2="688.0" y2="94.7" stroke="#9a9a9a" stroke-width="0.8"/><text x="691.3" y="97.4" font-family="Liberation Sans, sans-serif" font-size="7.8" fill="#3a3a3a" font-weight="normal" font-style="normal" textLength="7.6" lengthAdjust="spacingAndGlyphs" stroke="#3a3a3a" stroke-width="0.15">20</text><line x1="702.2" y1="93.89999999999999" x2="702.2" y2="94.7" stroke="#9a9a9a" stroke-width="0.8"/><line x1="709.3" y1="93.1" x2="709.3" y2="95.5" stroke="#9a9a9a" stroke-width="0.8"/><line x1="716.3" y1="93.89999999999999" x2="716.3" y2="94.7" stroke="#9a9a9a" stroke-width="0.8"/><text x="719.6" y="97.4" font-family="Liberation Sans, sans-serif" font-size="7.8" fill="#3a3a3a" font-weight="normal" font-style="normal" textLength="7.6" lengthAdjust="spacingAndGlyphs" stroke="#3a3a3a" stroke-width="0.15">21</text><line x1="730.5" y1="93.89999999999999" x2="730.5" y2="94.7" stroke="#9a9a9a" stroke-width="0.8"/><line x1="737.6" y1="93.1" x2="737.6" y2="95.5" stroke="#9a9a9a" stroke-width="0.8"/><line x1="744.7" y1="93.89999999999999" x2="744.7" y2="94.7" stroke="#9a9a9a" stroke-width="0.8"/><text x="747.9" y="97.4" font-family="Liberation Sans, sans-serif" font-size="7.8" fill="#3a3a3a" font-weight="normal" font-style="normal" textLength="7.6" lengthAdjust="spacingAndGlyphs" stroke="#3a3a3a" stroke-width="0.15">22</text><line x1="758.8" y1="93.89999999999999" x2="758.8" y2="94.7" stroke="#9a9a9a" stroke-width="0.8"/><line x1="765.9" y1="93.1" x2="765.9" y2="95.5" stroke="#9a9a9a" stroke-width="0.8"/><line x1="773.0" y1="93.89999999999999" x2="773.0" y2="94.7" stroke="#9a9a9a" stroke-width="0.8"/><text x="776.3" y="97.4" font-family="Liberation Sans, sans-serif" font-size="7.8" fill="#3a3a3a" font-weight="normal" font-style="normal" textLength="7.6" lengthAdjust="spacingAndGlyphs" stroke="#3a3a3a" stroke-width="0.15">23</text><line x1="787.1" y1="93.89999999999999" x2="787.1" y2="94.7" stroke="#9a9a9a" stroke-width="0.8"/><line x1="794.2" y1="93.1" x2="794.2" y2="95.5" stroke="#9a9a9a" stroke-width="0.8"/><line x1="801.3" y1="93.89999999999999" x2="801.3" y2="94.7" stroke="#9a9a9a" stroke-width="0.8"/><text x="804.6" y="97.4" font-family="Liberation Sans, sans-serif" font-size="7.8" fill="#3a3a3a" font-weight="normal" font-style="normal" textLength="7.6" lengthAdjust="spacingAndGlyphs" stroke="#3a3a3a" stroke-width="0.15">24</text><line x1="815.5" y1="93.89999999999999" x2="815.5" y2="94.7" stroke="#9a9a9a" stroke-width="0.8"/><line x1="822.5" y1="93.1" x2="822.5" y2="95.5" stroke="#9a9a9a" stroke-width="0.8"/><line x1="829.6" y1="93.89999999999999" x2="829.6" y2="94.7" stroke="#9a9a9a" stroke-width="0.8"/><text x="832.9" y="97.4" font-family="Liberation Sans, sans-serif" font-size="7.8" fill="#3a3a3a" font-weight="normal" font-style="normal" textLength="7.6" lengthAdjust="spacingAndGlyphs" stroke="#3a3a3a" stroke-width="0.15">25</text><line x1="843.8" y1="93.89999999999999" x2="843.8" y2="94.7" stroke="#9a9a9a" stroke-width="0.8"/><line x1="850.9" y1="93.1" x2="850.9" y2="95.5" stroke="#9a9a9a" stroke-width="0.8"/><line x1="857.9" y1="93.89999999999999" x2="857.9" y2="94.7" stroke="#9a9a9a" stroke-width="0.8"/><text x="861.2" y="97.4" font-family="Liberation Sans, sans-serif" font-size="7.8" fill="#3a3a3a" font-weight="normal" font-style="normal" textLength="7.6" lengthAdjust="spacingAndGlyphs" stroke="#3a3a3a" stroke-width="0.15">26</text><line x1="872.1" y1="93.89999999999999" x2="872.1" y2="94.7" stroke="#9a9a9a" stroke-width="0.8"/><line x1="879.2" y1="93.1" x2="879.2" y2="95.5" stroke="#9a9a9a" stroke-width="0.8"/><line x1="886.3" y1="93.89999999999999" x2="886.3" y2="94.7" stroke="#9a9a9a" stroke-width="0.8"/><text x="889.5" y="97.4" font-family="Liberation Sans, sans-serif" font-size="7.8" fill="#3a3a3a" font-weight="normal" font-style="normal" textLength="7.6" lengthAdjust="spacingAndGlyphs" stroke="#3a3a3a" stroke-width="0.15">27</text><line x1="900.4" y1="93.89999999999999" x2="900.4" y2="94.7" stroke="#9a9a9a" stroke-width="0.8"/><line x1="907.5" y1="93.1" x2="907.5" y2="95.5" stroke="#9a9a9a" stroke-width="0.8"/><line x1="914.6" y1="93.89999999999999" x2="914.6" y2="94.7" stroke="#9a9a9a" stroke-width="0.8"/><text x="917.9" y="97.4" font-family="Liberation Sans, sans-serif" font-size="7.8" fill="#3a3a3a" font-weight="normal" font-style="normal" textLength="7.6" lengthAdjust="spacingAndGlyphs" stroke="#3a3a3a" stroke-width="0.15">28</text><line x1="928.7" y1="93.89999999999999" x2="928.7" y2="94.7" stroke="#9a9a9a" stroke-width="0.8"/><path d="M125.2,88 h7.2 l-3.6,4.4 z" fill="#fdfdfd" stroke="#777" stroke-width="0.8"/><path d="M125.2,97.6 l3.6,-4.4 l3.6,4.4 z" fill="#fdfdfd" stroke="#777" stroke-width="0.8"/><rect x="125.2" y="98.2" width="7.2" height="5.6" fill="#fdfdfd" stroke="#777" stroke-width="0.8"/><path d="M895,97.6 l3.4,-4 l3.4,4 v2.8 h-6.8 z" fill="#fdfdfd" stroke="#777" stroke-width="0.8"/><rect x="2.6" y="104.5" width="9.6" height="404.5" fill="#fdfdfd"/><rect x="2.6" y="104.5" width="9.6" height="13.3" fill="#d9d9d9"/><line x1="7.0" y1="124.4" x2="7.800000000000001" y2="124.4" stroke="#9a9a9a" stroke-width="0.8"/><line x1="6.2" y1="131.5" x2="8.6" y2="131.5" stroke="#9a9a9a" stroke-width="0.8"/><line x1="7.0" y1="138.5" x2="7.800000000000001" y2="138.5" stroke="#9a9a9a" stroke-width="0.8"/><text transform="translate(10,147.4) rotate(-90)" font-family="Liberation Sans, sans-serif" font-size="7.4" fill="#444" textLength="3.6" lengthAdjust="spacingAndGlyphs">1</text><line x1="7.0" y1="152.7" x2="7.800000000000001" y2="152.7" stroke="#9a9a9a" stroke-width="0.8"/><line x1="6.2" y1="159.8" x2="8.6" y2="159.8" stroke="#9a9a9a" stroke-width="0.8"/><line x1="7.0" y1="166.9" x2="7.800000000000001" y2="166.9" stroke="#9a9a9a" stroke-width="0.8"/><text transform="translate(10,175.7) rotate(-90)" font-family="Liberation Sans, sans-serif" font-size="7.4" fill="#444" textLength="3.6" lengthAdjust="spacingAndGlyphs">2</text><line x1="7.0" y1="181.0" x2="7.800000000000001" y2="181.0" stroke="#9a9a9a" stroke-width="0.8"/><line x1="6.2" y1="188.1" x2="8.6" y2="188.1" stroke="#9a9a9a" stroke-width="0.8"/><line x1="7.0" y1="195.2" x2="7.800000000000001" y2="195.2" stroke="#9a9a9a" stroke-width="0.8"/><text transform="translate(10,204.1) rotate(-90)" font-family="Liberation Sans, sans-serif" font-size="7.4" fill="#444" textLength="3.6" lengthAdjust="spacingAndGlyphs">3</text><line x1="7.0" y1="209.3" x2="7.800000000000001" y2="209.3" stroke="#9a9a9a" stroke-width="0.8"/><line x1="6.2" y1="216.4" x2="8.6" y2="216.4" stroke="#9a9a9a" stroke-width="0.8"/><line x1="7.0" y1="223.5" x2="7.800000000000001" y2="223.5" stroke="#9a9a9a" stroke-width="0.8"/><text transform="translate(10,232.4) rotate(-90)" font-family="Liberation Sans, sans-serif" font-size="7.4" fill="#444" textLength="3.6" lengthAdjust="spacingAndGlyphs">4</text><line x1="7.0" y1="237.7" x2="7.800000000000001" y2="237.7" stroke="#9a9a9a" stroke-width="0.8"/><line x1="6.2" y1="244.7" x2="8.6" y2="244.7" stroke="#9a9a9a" stroke-width="0.8"/><line x1="7.0" y1="251.8" x2="7.800000000000001" y2="251.8" stroke="#9a9a9a" stroke-width="0.8"/><text transform="translate(10,260.7) rotate(-90)" font-family="Liberation Sans, sans-serif" font-size="7.4" fill="#444" textLength="3.6" lengthAdjust="spacingAndGlyphs">5</text><line x1="7.0" y1="266.0" x2="7.800000000000001" y2="266.0" stroke="#9a9a9a" stroke-width="0.8"/><line x1="6.2" y1="273.1" x2="8.6" y2="273.1" stroke="#9a9a9a" stroke-width="0.8"/><line x1="7.0" y1="280.1" x2="7.800000000000001" y2="280.1" stroke="#9a9a9a" stroke-width="0.8"/><text transform="translate(10,289.0) rotate(-90)" font-family="Liberation Sans, sans-serif" font-size="7.4" fill="#444" textLength="3.6" lengthAdjust="spacingAndGlyphs">6</text><line x1="7.0" y1="294.3" x2="7.800000000000001" y2="294.3" stroke="#9a9a9a" stroke-width="0.8"/><line x1="6.2" y1="301.4" x2="8.6" y2="301.4" stroke="#9a9a9a" stroke-width="0.8"/><line x1="7.0" y1="308.5" x2="7.800000000000001" y2="308.5" stroke="#9a9a9a" stroke-width="0.8"/><text transform="translate(10,317.3) rotate(-90)" font-family="Liberation Sans, sans-serif" font-size="7.4" fill="#444" textLength="3.6" lengthAdjust="spacingAndGlyphs">7</text><line x1="7.0" y1="322.6" x2="7.800000000000001" y2="322.6" stroke="#9a9a9a" stroke-width="0.8"/><line x1="6.2" y1="329.7" x2="8.6" y2="329.7" stroke="#9a9a9a" stroke-width="0.8"/><line x1="7.0" y1="336.8" x2="7.800000000000001" y2="336.8" stroke="#9a9a9a" stroke-width="0.8"/><text transform="translate(10,345.7) rotate(-90)" font-family="Liberation Sans, sans-serif" font-size="7.4" fill="#444" textLength="3.6" lengthAdjust="spacingAndGlyphs">8</text><line x1="7.0" y1="350.9" x2="7.800000000000001" y2="350.9" stroke="#9a9a9a" stroke-width="0.8"/><line x1="6.2" y1="358.0" x2="8.6" y2="358.0" stroke="#9a9a9a" stroke-width="0.8"/><line x1="7.0" y1="365.1" x2="7.800000000000001" y2="365.1" stroke="#9a9a9a" stroke-width="0.8"/><text transform="translate(10,374.0) rotate(-90)" font-family="Liberation Sans, sans-serif" font-size="7.4" fill="#444" textLength="3.6" lengthAdjust="spacingAndGlyphs">9</text><line x1="7.0" y1="379.3" x2="7.800000000000001" y2="379.3" stroke="#9a9a9a" stroke-width="0.8"/><line x1="6.2" y1="386.3" x2="8.6" y2="386.3" stroke="#9a9a9a" stroke-width="0.8"/><line x1="7.0" y1="393.4" x2="7.800000000000001" y2="393.4" stroke="#9a9a9a" stroke-width="0.8"/><text transform="translate(10,404.2) rotate(-90)" font-family="Liberation Sans, sans-serif" font-size="7.4" fill="#444" textLength="7.4" lengthAdjust="spacingAndGlyphs">10</text><line x1="7.0" y1="407.6" x2="7.800000000000001" y2="407.6" stroke="#9a9a9a" stroke-width="0.8"/><line x1="6.2" y1="414.7" x2="8.6" y2="414.7" stroke="#9a9a9a" stroke-width="0.8"/><line x1="7.0" y1="421.7" x2="7.800000000000001" y2="421.7" stroke="#9a9a9a" stroke-width="0.8"/><text transform="translate(10,432.5) rotate(-90)" font-family="Liberation Sans, sans-serif" font-size="7.4" fill="#444" textLength="7.4" lengthAdjust="spacingAndGlyphs">11</text><line x1="7.0" y1="435.9" x2="7.800000000000001" y2="435.9" stroke="#9a9a9a" stroke-width="0.8"/><line x1="6.2" y1="443.0" x2="8.6" y2="443.0" stroke="#9a9a9a" stroke-width="0.8"/><line x1="7.0" y1="450.1" x2="7.800000000000001" y2="450.1" stroke="#9a9a9a" stroke-width="0.8"/><text transform="translate(10,460.8) rotate(-90)" font-family="Liberation Sans, sans-serif" font-size="7.4" fill="#444" textLength="7.4" lengthAdjust="spacingAndGlyphs">12</text><line x1="7.0" y1="464.2" x2="7.800000000000001" y2="464.2" stroke="#9a9a9a" stroke-width="0.8"/><line x1="6.2" y1="471.3" x2="8.6" y2="471.3" stroke="#9a9a9a" stroke-width="0.8"/><line x1="7.0" y1="478.4" x2="7.800000000000001" y2="478.4" stroke="#9a9a9a" stroke-width="0.8"/><text transform="translate(10,489.2) rotate(-90)" font-family="Liberation Sans, sans-serif" font-size="7.4" fill="#444" textLength="7.4" lengthAdjust="spacingAndGlyphs">13</text><line x1="7.0" y1="492.5" x2="7.800000000000001" y2="492.5" stroke="#9a9a9a" stroke-width="0.8"/><line x1="6.2" y1="499.6" x2="8.6" y2="499.6" stroke="#9a9a9a" stroke-width="0.8"/><line x1="7.0" y1="506.7" x2="7.800000000000001" y2="506.7" stroke="#9a9a9a" stroke-width="0.8"/><line x1="7" y1="110.2" x2="7.8" y2="110.2" stroke="#9a9a9a" stroke-width="0.8"/><rect x="1009.6" y="87" width="14.4" height="422" fill="#f6f6f6"/><rect x="1012.4" y="100" width="11.6" height="397" fill="#e7e7e7"/><rect x="1012.5" y="88.5" width="10.3" height="11.2" fill="#fff" stroke="#ababab" stroke-width="0.9"/><path d="M1015,95.6 l2.7,-2.9 l2.7,2.9 z" fill="#555"/><rect x="1012.5" y="112" width="10.3" height="129.4" fill="#fff" stroke="#ababab" stroke-width="0.9"/><rect x="1012.5" y="497" width="10.3" height="10.5" fill="#fff" stroke="#cfcfcf" stroke-width="0.9"/><path d="M1015,501 h5.4 l-2.7,2.9 z" fill="#555"/>
<rect x="0" y="508.8" width="1024" height="18.2" fill="#2b579a"/><text x="5.6" y="519.5" font-family="Liberation Sans, sans-serif" font-size="9.3" fill="#fff" font-weight="normal" font-style="normal" textLength="46.4" lengthAdjust="spacingAndGlyphs" stroke="#fff" stroke-width="0.3">PAGE 1 OF 2</text><text x="66.4" y="519.5" font-family="Liberation Sans, sans-serif" font-size="9.3" fill="#fff" font-weight="normal" font-style="normal" textLength="46.6" lengthAdjust="spacingAndGlyphs" stroke="#fff" stroke-width="0.3">709 WORDS</text><path d="M814.5,513 l4.2,1 v7.4 l-4.2,-1 z M823.8,513 l-4.2,1 v7.4 l4.2,-1 z" fill="#c9d6ea" stroke="#e8eef8" stroke-width="0.6"/><rect x="832.8" y="508.8" width="29.6" height="16.6" fill="#1f4684"/><rect x="842.4" y="512.2" width="10.8" height="9.2" fill="#8fa6cc" stroke="#dfe7f3" stroke-width="0.7"/><line x1="843.6" y1="514.2" x2="852" y2="514.2" stroke="#c9d6ea" stroke-width="0.6"/><line x1="843.6" y1="516.2" x2="852" y2="516.2" stroke="#c9d6ea" stroke-width="0.6"/><line x1="843.6" y1="518.2" x2="852" y2="518.2" stroke="#c9d6ea" stroke-width="0.6"/><line x1="843.6" y1="520" x2="852" y2="520" stroke="#c9d6ea" stroke-width="0.6"/><rect x="871.4" y="512.2" width="8" height="8.6" fill="#8fa6cc" stroke="#dfe7f3" stroke-width="0.7"/><line x1="872.6" y1="514.4" x2="878" y2="514.4" stroke="#dfe7f3" stroke-width="0.6"/><line x1="872.6" y1="516.4" x2="878" y2="516.4" stroke="#dfe7f3" stroke-width="0.6"/><line x1="872.6" y1="518.4" x2="878" y2="518.4" stroke="#dfe7f3" stroke-width="0.6"/><circle cx="879.4" cy="519" r="2.7" fill="#2b579a" stroke="#e8eef8" stroke-width="0.8"/><line x1="876.7" y1="519" x2="882.1" y2="519" stroke="#e8eef8" stroke-width="0.6"/><line x1="879.4" y1="516.3" x2="879.4" y2="521.7" stroke="#e8eef8" stroke-width="0.6"/><rect x="894" y="515.7" width="5" height="1.6" fill="#fff"/><line x1="901.7" y1="516.5" x2="976.8" y2="516.5" stroke="#c5d1e6" stroke-width="1"/><rect x="937.8" y="512" width="3.2" height="9.3" fill="#fff"/><rect x="979.8" y="515.7" width="5.8" height="1.6" fill="#fff"/><rect x="981.9" y="513.6" width="1.6" height="5.8" fill="#fff"/><text x="997" y="520" font-family="Liberation Sans, sans-serif" font-size="9.3" fill="#fff" font-weight="normal" font-style="normal" textLength="20.0" lengthAdjust="spacingAndGlyphs" stroke="#fff" stroke-width="0.3">100%</text><rect x="0" y="526" width="1024" height="1" fill="#3c639f"/><rect x="0" y="526" width="185" height="1" fill="#6788b8"/><rect x="185" y="526" width="140" height="1" fill="#b4bccb"/><rect x="325" y="526" width="120" height="1" fill="#8e9db8"/>
<g id="popg" transform="translate(-1,0.6)">
<rect x="756.5" y="157" width="7" height="9" fill="#eac282" stroke="#c9a15e" stroke-width="0.6"/>
<rect x="758.5" y="156" width="3" height="2" fill="#666"/>
<rect x="759.8" y="160.3" width="5.4" height="6.4" fill="#fff" stroke="#666" stroke-width="0.7"/>
<text x="767.5" y="166.2" font-family="Liberation Sans, sans-serif" font-size="8.6" fill="#555" textLength="19.5" lengthAdjust="spacingAndGlyphs">(Ctrl)</text>
<path d="M789.4,161.8 h4 l-2,2.3 z" fill="#555"/>
</g>
<rect x="751.6" y="138.5" width="1.2" height="14" fill="#222"/>
</svg>
</body></html>
